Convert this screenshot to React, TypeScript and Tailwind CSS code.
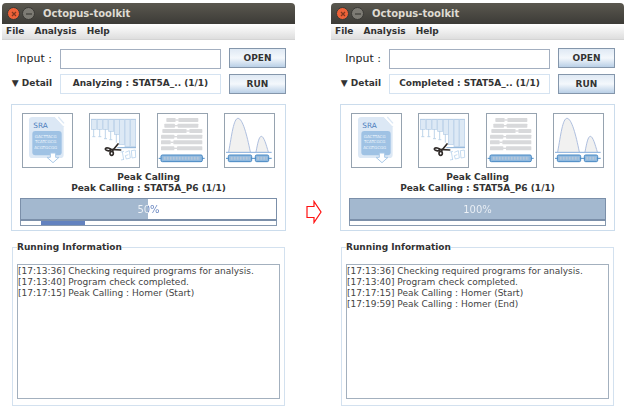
import React from "react";

type Run = {
  id: string;
  status: string;
  percent: number;
  busy: boolean;
  log: string[];
};

const runs: Run[] = [
  {
    id: "analyzing",
    status: "Analyzing : STAT5A_.. (1/1)",
    percent: 50,
    busy: true,
    log: [
      "[17:13:36] Checking required programs for analysis.",
      "[17:13:40] Program check completed.",
      "[17:17:15] Peak Calling : Homer (Start)",
    ],
  },
  {
    id: "completed",
    status: "Completed : STAT5A_.. (1/1)",
    percent: 100,
    busy: false,
    log: [
      "[17:13:36] Checking required programs for analysis.",
      "[17:13:40] Program check completed.",
      "[17:17:15] Peak Calling : Homer (Start)",
      "[17:19:59] Peak Calling : Homer (End)",
    ],
  },
];

function SraIcon() {
  return (
    <svg viewBox="70 48 147 159" className="block h-full w-full" role="img" aria-label="SRA download">
      <path d="M98 57H166L192 85V170Q192 180 182 180H98Q88 180 88 170V67Q88 57 98 57Z" fill="#dce8f5" />
      <path d="M176 57L193 76" stroke="#dce8f5" strokeWidth="4" />
      <path d="M167 57L192 84" stroke="#fff" strokeWidth="3" />
      <rect x="98" y="99" width="88" height="73" rx="9" fill="#9fc2e4" />
      <text x="101" y="89" fontSize="22" fill="#4f7fbd">SRA</text>
      <g fontSize="12" fill="#f0f6fc" textAnchor="middle">
        <text x="138" y="120">GACTTACG</text>
        <text x="138" y="136">TCATCGCG</text>
        <text x="138" y="153">ACGTGCGG</text>
      </g>
      <path d="M152 165H168V178H178L160 194L142 178H152Z" fill="#fff" stroke="#a9c9e8" strokeWidth="3" />
    </svg>
  );
}

function TrimIcon() {
  const strips = [
    [277, 94], [295, 94], [312, 94], [329, 100], [346, 109], [361, 140], [378, 146], [395, 146],
  ];
  return (
    <svg viewBox="273 48 147 159" className="block h-full w-full" role="img" aria-label="Trimming">
      {strips.map(([x, bottom]) => (
        <rect key={x} x={x} y="65" width="15" height={bottom - 65} fill="#dde9f5" stroke="#b4cde6" strokeWidth="2" />
      ))}
      <path d="M276 64H411" stroke="#a9c6e3" strokeWidth="2" />
      <path d="M284 94V115M280 116H289M302 94V115M298 116H307M319 94V121M315 122H324M335 100V124M331 125H340M352 109V134" stroke="#9fbfdf" strokeWidth="2" />
      <path d="M355 149H411" stroke="#83add6" strokeWidth="3" />
      <g fill="none" stroke="#302b29" strokeLinecap="round">
        <ellipse cx="327" cy="154" rx="8" ry="4" strokeWidth="5" transform="rotate(12 327 154)" />
        <ellipse cx="338" cy="166" rx="5" ry="6" strokeWidth="5" />
        <path d="M334 154L365 156" strokeWidth="5" />
        <path d="M339 160L357 138" strokeWidth="5" />
      </g>
      <g fill="none" stroke="#a8c8e8" strokeWidth="2">
        <path d="M365 162L375 160M370 162L374 185M366 186L375 184M379 163L391 158L394 180L382 183L379 173L388 170" />
        <path d="M397 158L409 156L410 178L399 180Z" />
      </g>
    </svg>
  );
}

function AlignIcon() {
  const reads = [
    [50, 146, 66, 82], [44, 146, 83, 80], [38, 158, 99, 115], [34, 158, 116, 78], [34, 158, 133, 67], [34, 158, 151, 78],
  ];
  return (
    <svg viewBox="25 48 147 159" className="block h-full w-full" role="img" aria-label="Alignment">
      {reads.map(([x1, x2, y, gap]) => (
        <g key={y} fill="#d8d9db">
          <rect x={x1} y={y - 6} width={gap - 4 - x1} height="12" rx="2" />
          <rect x={gap + 4} y={y - 6} width={x2 - gap - 4} height="12" rx="2" />
          <rect x={gap - 5} y={y - 2} width="10" height="4" />
        </g>
      ))}
      <path d="M27 181H165" stroke="#4b8bc5" strokeWidth="3" />
      <rect x="34" y="171" width="124" height="20" rx="4" fill="#8fb9df" stroke="#4788c3" strokeWidth="3" />
      <path d="M42 181H151" stroke="#b4c6d9" strokeWidth="9" strokeDasharray="6 3" />
    </svg>
  );
}

function PeakIcon() {
  return (
    <svg viewBox="228 48 147 159" className="block h-full w-full" role="img" aria-label="Peaks">
      <g fill="#f1f1f0" stroke="#aebfdf" strokeWidth="3">
        <path d="M239 162C248 112 254 61 267 61C281 61 294 112 304 162" />
        <path d="M321 162C326 136 330 115 337 115C345 115 352 142 358 162" />
      </g>
      <path d="M231 163H368" stroke="#85addb" strokeWidth="3" />
      <path d="M231 181H368" stroke="#4b8bc5" strokeWidth="3" />
      <g fill="#8fb9df" stroke="#4788c3" strokeWidth="3">
        <rect x="238" y="171" width="70" height="20" rx="4" />
        <rect x="319" y="171" width="40" height="20" rx="4" />
      </g>
      <path d="M245 181H302M325 181H354" stroke="#b4c6d9" strokeWidth="9" strokeDasharray="6 3" />
    </svg>
  );
}

const steps = [SraIcon, TrimIcon, AlignIcon, PeakIcon];

function TitleBar() {
  return (
    <header className="flex h-[21px] items-center rounded-t-[4px] bg-linear-to-b from-[#5b584f] to-[#3c3b37] pl-[5px]">
      <button aria-label="Close" className="flex size-[13px] items-center justify-center rounded-full border border-[#3a3935] bg-[#ee6239]">
        <svg viewBox="0 0 8 8" className="size-[8px]" aria-hidden="true">
          <path d="M2 2L6 6M6 2L2 6" stroke="#7d3720" strokeWidth="1.2" />
        </svg>
      </button>
      <button aria-label="Minimize" className="ml-[2px] flex size-[13px] items-center justify-center rounded-full border border-[#3a3935] bg-[#7d7b74]">
        <svg viewBox="0 0 8 8" className="size-[8px]" aria-hidden="true">
          <path d="M1 4H7" stroke="#3f3e3a" strokeWidth="1.2" />
        </svg>
      </button>
      <h1 className="ml-[8px] text-[10px] font-bold text-[#dfdbd2]">Octopus-toolkit</h1>
    </header>
  );
}

const actionButton =
  "h-5 w-full border border-[#8496ab] bg-linear-to-b from-[#dfe9f4] via-[#f4f8fc] to-[#b9cfe6] text-[9px] font-bold leading-none text-[#333]";

function ToolkitWindow({ run }: { run: Run }) {
  return (
    <section className="min-w-0 flex-1" aria-label={run.status}>
      <TitleBar />
      <nav className="flex h-4 items-center gap-[10px] border-b border-[#d4d4d4] bg-linear-to-b from-white to-[#dedede] pl-1 text-[9px] font-bold leading-none text-[#333]">
        <button>File</button>
        <button>Analysis</button>
        <button>Help</button>
      </nav>

      <div className="px-[9px] pt-2">
        <div className="flex gap-2">
          <div className="grid flex-1 grid-cols-[41px_minmax(0,1fr)] items-center gap-x-2 gap-y-1">
            <label htmlFor={run.id} className="whitespace-nowrap text-right text-[11px] leading-none text-[#222]">
              Input :
            </label>
            <input id={run.id} type="text" className="h-5 w-full border border-[#a3afc0] bg-white px-1 text-[9px] outline-none" />
            <button aria-expanded="true" className="whitespace-nowrap text-right text-[9px] font-bold leading-none text-[#333]">
              ▼ Detail
            </button>
            <output className="flex h-5 items-center justify-center whitespace-nowrap border border-[#d5e3f1] text-[9px] font-bold leading-none text-[#333]">
              {run.status}
            </output>
          </div>
          <div className="flex w-[57px] flex-col gap-[6px]">
            <button className={actionButton}>OPEN</button>
            <button className={actionButton}>RUN</button>
          </div>
        </div>

        <div className="mt-[10px] border border-[#cbdcec] px-[10px] pt-2 pb-1">
          <div className="flex justify-between">
            {steps.map((Icon, i) => (
              <div key={i} className="h-[55px] w-[51px] border border-[#96a3b0]">
                <Icon />
              </div>
            ))}
          </div>
          <div className="-mx-[2px] mt-1 text-center text-[9px] font-bold leading-[11px] text-[#333]">
            <p>Peak Calling</p>
            <p>Peak Calling : STAT5A_P6 (1/1)</p>
          </div>
          <div
            role="progressbar"
            aria-label="Peak Calling"
            aria-valuenow={run.percent}
            className="-mx-[2px] mt-1 h-[23px] border border-b-2 border-[#7b8fa9]"
            style={{ backgroundImage: `linear-gradient(90deg, #a3b8cf ${run.percent}%, #fff ${run.percent}%)` }}
          >
            <span
              className="block bg-clip-text text-center text-[10px] leading-[21px] text-transparent"
              style={{ backgroundImage: `linear-gradient(90deg, #eef2f7 ${run.percent}%, #6382bf ${run.percent}%)` }}
            >
              {run.percent}%
            </span>
          </div>
          <div className="-mx-[2px] h-[5px] border border-t-0 border-[#8799af]">
            {run.busy && <div className="ml-[8%] h-full w-[17%] bg-[#6382bf]" />}
          </div>
        </div>

        <fieldset className="mx-px mt-[10px] border border-[#d3e1ef] px-1 pb-[6px]">
          <legend className="text-[9px] font-bold leading-3 text-[#333]">Running Information</legend>
          <textarea
            readOnly
            aria-label="Running Information"
            value={run.log.join("\n")}
            className="mt-[11px] block h-[135px] w-full resize-none overflow-hidden whitespace-pre border border-[#a3b0be] bg-white p-0 pt-px text-[9px] leading-[11px] text-[#444] outline-none"
          />
        </fieldset>
      </div>
    </section>
  );
}

export default function App() {
  return (
    <main className="flex min-h-screen bg-white px-[2px] pt-[3px] font-['DejaVu_Sans',sans-serif]">
      <ToolkitWindow run={runs[0]} />
      <div className="flex w-9 shrink-0 justify-center pt-[197px] pl-[2px]">
        <svg viewBox="0 0 16 24" className="h-6 w-4" role="img" aria-label="Then">
          <path d="M1 6.5H8V1.500L15 12L8 22.500V17.500H1Z" fill="#fff" stroke="#ff1010" strokeWidth="1.2" />
        </svg>
      </div>
      <ToolkitWindow run={runs[1]} />
    </main>
  );
}
